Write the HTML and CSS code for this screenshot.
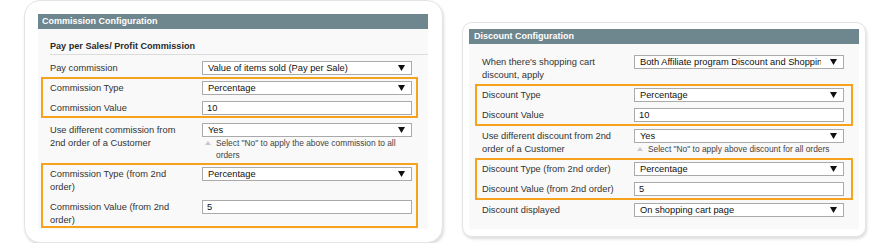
FILE: index.html
```html
<!DOCTYPE html>
<html lang="en">
<head>
    <meta charset="UTF-8">
    <title>Affiliate Configuration</title>
    <link rel="stylesheet" href="styles.css">
</head>
<body>
    <div class="page">
        <section class="card card-commission">
            <h2 class="card-head">Commission Configuration</h2>
            <div class="panel">
                <h3 class="panel-title">Pay per Sales/ Profit Commission</h3>
                <div class="rows">
                    <div class="row">
                        <label class="row-label">Pay commission</label>
                        <div class="row-field">
                            <div class="select"><span class="select-text">Value of items sold (Pay per Sale)</span><svg class="caret" width="7" height="6" viewBox="0 0 7 6"><polygon points="0,0 7,0 3.5,6"/></svg></div>
                        </div>
                    </div>
                    <div class="group">
                        <div class="row">
                            <label class="row-label">Commission Type</label>
                            <div class="row-field">
                                <div class="select"><span class="select-text">Percentage</span><svg class="caret" width="7" height="6" viewBox="0 0 7 6"><polygon points="0,0 7,0 3.5,6"/></svg></div>
                            </div>
                        </div>
                        <div class="row">
                            <label class="row-label">Commission Value</label>
                            <div class="row-field">
                                <div class="input">10</div>
                            </div>
                        </div>
                    </div>
                    <div class="row row-gap">
                        <label class="row-label">Use different commission from 2nd order of a Customer</label>
                        <div class="row-field">
                            <div class="select"><span class="select-text">Yes</span><svg class="caret" width="7" height="6" viewBox="0 0 7 6"><polygon points="0,0 7,0 3.5,6"/></svg></div>
                            <p class="note"><span class="note-mark"></span><span>Select "No" to apply the above commission to all orders</span></p>
                        </div>
                    </div>
                    <div class="group group-tall">
                        <div class="row">
                            <label class="row-label">Commission Type (from 2nd order)</label>
                            <div class="row-field">
                                <div class="select"><span class="select-text">Percentage</span><svg class="caret" width="7" height="6" viewBox="0 0 7 6"><polygon points="0,0 7,0 3.5,6"/></svg></div>
                            </div>
                        </div>
                        <div class="row">
                            <label class="row-label">Commission Value (from 2nd order)</label>
                            <div class="row-field">
                                <div class="input">5</div>
                            </div>
                        </div>
                    </div>
                </div>
            </div>
        </section>

        <section class="card card-discount">
            <h2 class="card-head">Discount Configuration</h2>
            <div class="panel">
                <div class="rows">
                    <div class="row">
                        <label class="row-label">When there's shopping cart discount, apply</label>
                        <div class="row-field">
                            <div class="select"><span class="select-text">Both Affiliate program Discount and Shopping Cart Discount</span><svg class="caret" width="7" height="6" viewBox="0 0 7 6"><polygon points="0,0 7,0 3.5,6"/></svg></div>
                        </div>
                    </div>
                    <div class="group">
                        <div class="row">
                            <label class="row-label">Discount Type</label>
                            <div class="row-field">
                                <div class="select"><span class="select-text">Percentage</span><svg class="caret" width="7" height="6" viewBox="0 0 7 6"><polygon points="0,0 7,0 3.5,6"/></svg></div>
                            </div>
                        </div>
                        <div class="row">
                            <label class="row-label">Discount Value</label>
                            <div class="row-field">
                                <div class="input">10</div>
                            </div>
                        </div>
                    </div>
                    <div class="row">
                        <label class="row-label">Use different discount from 2nd order of a Customer</label>
                        <div class="row-field">
                            <div class="select"><span class="select-text">Yes</span><svg class="caret" width="7" height="6" viewBox="0 0 7 6"><polygon points="0,0 7,0 3.5,6"/></svg></div>
                            <p class="note"><span class="note-mark"></span><span>Select "No" to apply above discount for all orders</span></p>
                        </div>
                    </div>
                    <div class="group">
                        <div class="row">
                            <label class="row-label">Discount Type (from 2nd order)</label>
                            <div class="row-field">
                                <div class="select"><span class="select-text">Percentage</span><svg class="caret" width="7" height="6" viewBox="0 0 7 6"><polygon points="0,0 7,0 3.5,6"/></svg></div>
                            </div>
                        </div>
                        <div class="row">
                            <label class="row-label">Discount Value (from 2nd order)</label>
                            <div class="row-field">
                                <div class="input">5</div>
                            </div>
                        </div>
                    </div>
                    <div class="row">
                        <label class="row-label">Discount displayed</label>
                        <div class="row-field">
                            <div class="select"><span class="select-text">On shopping cart page</span><svg class="caret" width="7" height="6" viewBox="0 0 7 6"><polygon points="0,0 7,0 3.5,6"/></svg></div>
                        </div>
                    </div>
                </div>
            </div>
        </section>
    </div>
</body>
</html>
```

FILE: styles.css
```css
* {
    box-sizing: border-box;
}

body {
    margin: 0;
    background-color: #fff;
    color: #333;
    font-family: 'Liberation Sans', Arial, sans-serif;
    font-size: 9.3px;
}

h2, h3, p {
    margin: 0;
}

.page {
    display: flex;
    align-items: flex-start;
    padding-left: 24px;
}

/* cards */

.card {
    background-color: #fff;
    border: 1px solid #e4e4e4;
    box-shadow: 1px 2px 3px rgba(0,0,0,0.14);
}

.card-commission {
    width: 419px;
    padding: 13px 14px 13px 13px;
    border-radius: 16px;
}

.card-discount {
    width: 404px;
    margin: 22px 0 0 19px;
    padding: 6px 6px 7px 6px;
    border-radius: 10px;
}

.card-head {
    height: 15px;
    line-height: 15px;
    padding-left: 4px;
    background-color: #6e868e;
    color: #fff;
    font-size: 9px;
    font-weight: bold;
}

.card-discount .card-head {
    padding-left: 5px;
}

.panel {
    background-color: #f9f9f9;
}

.card-commission .panel {
    padding: 0 10px 1px 3px;
}

.card-discount .panel {
    padding: 8px 6px 9px 6px;
}

.panel-title {
    margin: 0 -10px 0 9px;
    padding: 10px 0 1px;
    line-height: 14px;
    border-bottom: 1px solid #dcdcdc;
    color: #2a2a2a;
    font-size: 9.1px;
    font-weight: bold;
}

.card-commission .rows {
    padding-top: 3px;
}

/* rows */

.row {
    display: flex;
    padding: 3px 6px 3px 9px;
}

.card-discount .row {
    padding: 3px 9px 3px 7px;
}

.row-gap {
    margin-top: 2px;
}

.row-label {
    flex: 0 0 152px;
    padding-top: 1px;
    padding-right: 10px;
    line-height: 13px;
}

.row-field {
    width: 210px;
}

.select, .input {
    height: 14px;
    border: 1px solid #aaa;
    background-color: #fff;
    color: #111;
    line-height: 12px;
}

.select {
    display: flex;
    align-items: center;
    padding: 0 6px 0 5px;
}

.select-text {
    flex: 1;
    overflow: hidden;
    white-space: nowrap;
}

.caret {
    flex: none;
    margin-left: 9px;
    fill: #111;
}

.input {
    padding: 0 4px;
}

.note {
    display: flex;
    color: #444;
    font-size: 8.4px;
    line-height: 12px;
}

.note-mark {
    flex: none;
    width: 0;
    height: 0;
    margin: 4px 5px 0 3px;
    border-left: 3px solid transparent;
    border-right: 3px solid transparent;
    border-bottom: 4px solid #c8c8c8;
}

/* highlighted groups */

.group {
    margin-top: -1px;
    padding: 1px 0 3px;
    outline: 2px solid #f5a31c;
    outline-offset: -2px;
}

.card-discount .group {
    padding-bottom: 4px;
}

.group .row:last-child {
    padding-bottom: 0;
}

.group-tall {
    padding-bottom: 1px;
}
```
